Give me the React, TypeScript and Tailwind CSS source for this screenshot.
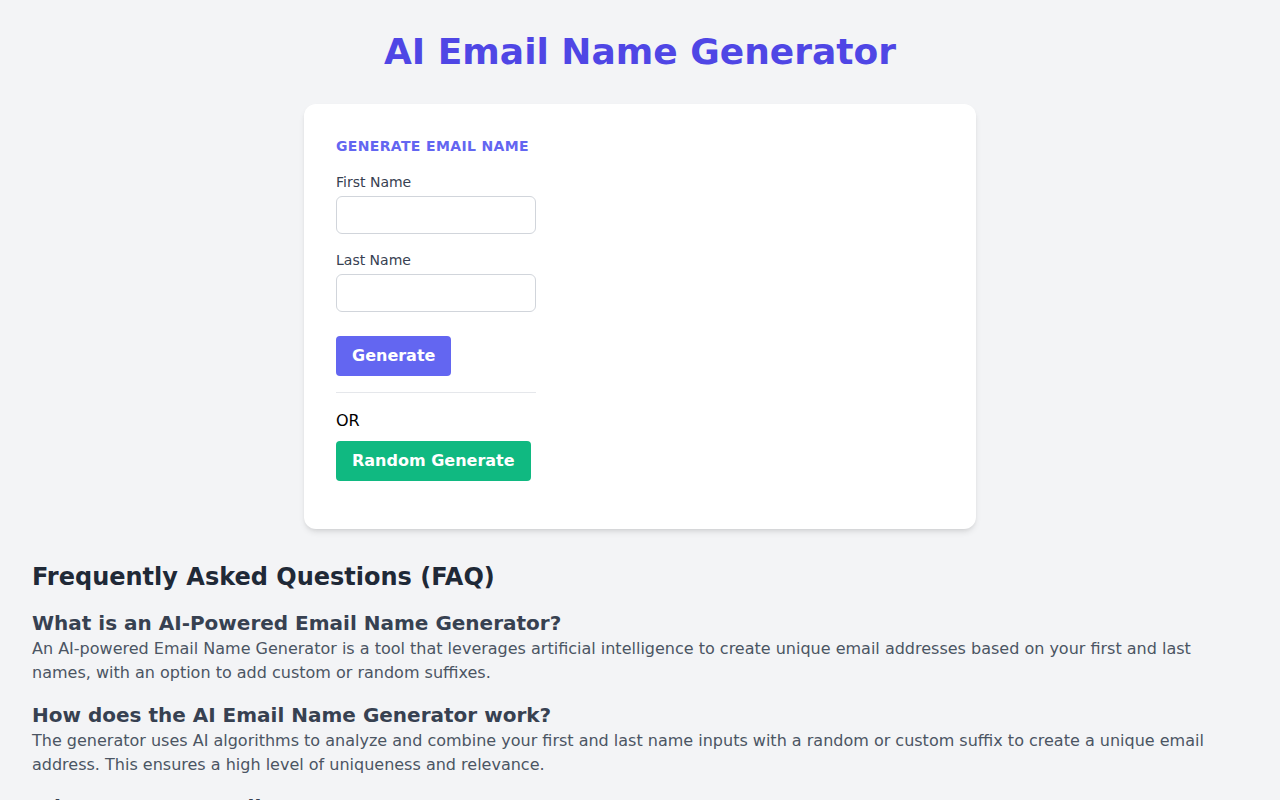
import React from "react";

const faqs = [
  {
    q: "What is an AI-Powered Email Name Generator?",
    a: "An AI-powered Email Name Generator is a tool that leverages artificial intelligence to create unique email addresses based on your first and last names, with an option to add custom or random suffixes.",
  },
  {
    q: "How does the AI Email Name Generator work?",
    a: "The generator uses AI algorithms to analyze and combine your first and last name inputs with a random or custom suffix to create a unique email address. This ensures a high level of uniqueness and relevance.",
  },
  {
    q: "Why use an AI Email Name Generator?",
    a: "It saves time and helps you find an available, professional-looking email address without guessing combinations by hand.",
  },
];

export default function App() {
  return (
    <div
      className="min-h-screen bg-[#f3f4f6] py-8"
      style={{ fontFamily: '"DejaVu Sans", sans-serif' }}
    >
      <h1 className="mb-8 text-center text-4xl font-bold text-[#4f46e5]">
        AI Email Name Generator
      </h1>

      <div className="mx-auto max-w-2xl rounded-xl bg-white p-8 pb-12 shadow-md">
        <h2 className="mb-4 text-sm font-semibold uppercase tracking-wide text-[#6366f1]">
          Generate Email Name
        </h2>

        <div className="w-[200px]">
          <label className="mb-1 block text-sm text-[#374151]">First Name</label>
          <input
            type="text"
            className="mb-4 block w-full rounded-md border border-[#d1d5db] px-3 py-2 text-sm"
          />
          <label className="mb-1 block text-sm text-[#374151]">Last Name</label>
          <input
            type="text"
            className="block w-full rounded-md border border-[#d1d5db] px-3 py-2 text-sm"
          />

          <button className="mt-6 rounded bg-[#6366f1] px-4 py-2 font-bold text-white">
            Generate
          </button>

          <hr className="my-4 border-[#e5e7eb]" />

          <p className="text-black">OR</p>
          <button className="mt-2 whitespace-nowrap rounded bg-[#10b981] px-4 py-2 font-bold text-white">
            Random Generate
          </button>
        </div>
      </div>

      <section className="mt-8 px-8">
        <h2 className="mb-4 text-2xl font-bold text-[#1f2937]">
          Frequently Asked Questions (FAQ)
        </h2>
        {faqs.map((f) => (
          <div key={f.q} className="mb-4">
            <h3 className="text-xl font-semibold text-[#374151]">{f.q}</h3>
            <p className="text-[#4b5563]">{f.a}</p>
          </div>
        ))}
      </section>
    </div>
  );
}
